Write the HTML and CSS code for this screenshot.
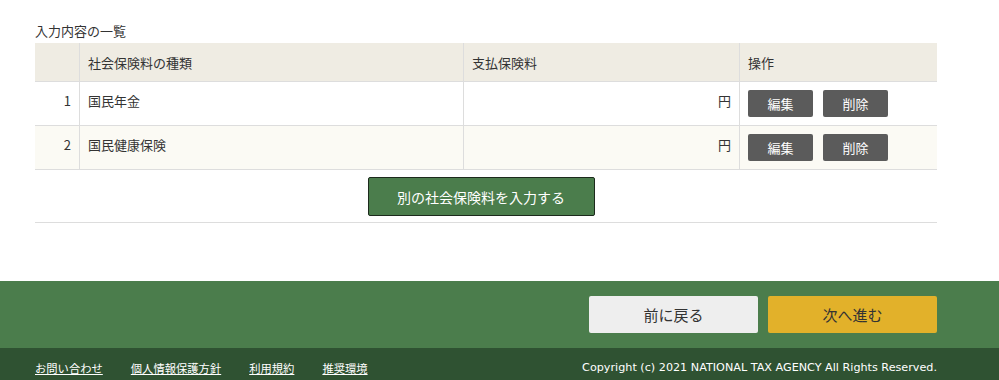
FILE: index.html
```html
<!DOCTYPE html>
<html lang="ja">
<head>
    <meta charset="UTF-8">
    <title>入力内容の一覧</title>
    <link rel="stylesheet" href="styles.css">
</head>
<body>
    <main class="content">
        <p class="list-title">入力内容の一覧</p>
        <table class="entry-table">
            <thead>
                <tr>
                    <th class="col-no"></th>
                    <th class="col-name">社会保険料の種類</th>
                    <th class="col-amount">支払保険料</th>
                    <th class="col-ops">操作</th>
                </tr>
            </thead>
            <tbody>
                <tr>
                    <td class="col-no">1</td>
                    <td class="col-name">国民年金</td>
                    <td class="col-amount">円</td>
                    <td class="col-ops">
                        <button class="btn-gray">編集</button>
                        <button class="btn-gray">削除</button>
                    </td>
                </tr>
                <tr class="alt">
                    <td class="col-no">2</td>
                    <td class="col-name">国民健康保険</td>
                    <td class="col-amount">円</td>
                    <td class="col-ops">
                        <button class="btn-gray">編集</button>
                        <button class="btn-gray">削除</button>
                    </td>
                </tr>
            </tbody>
        </table>
        <div class="add-row">
            <button class="btn-add">別の社会保険料を入力する</button>
        </div>
    </main>

    <div class="nav-band">
        <div class="nav-inner">
            <button class="btn-back">前に戻る</button>
            <button class="btn-next">次へ進む</button>
        </div>
    </div>

    <footer>
        <div class="footer-inner">
            <ul class="footer-links">
                <li><a href="#">お問い合わせ</a></li>
                <li><a href="#">個人情報保護方針</a></li>
                <li><a href="#">利用規約</a></li>
                <li><a href="#">推奨環境</a></li>
            </ul>
            <p class="copyright">Copyright (c) 2021 NATIONAL TAX AGENCY All Rights Reserved.</p>
        </div>
    </footer>
</body>
</html>
```

FILE: styles.css
```css
body {
    margin: 0;
    font-family: "Noto Sans CJK JP", "Noto Sans", sans-serif;
    font-size: 13px;
    color: #333;
    background: #fff;
}

.content {
    width: 902px;
    margin-left: 35px;
    padding-top: 21px;
    padding-bottom: 58px;
}

.list-title {
    margin: 0 0 3px;
    font-size: 13px;
    line-height: 19px;
}

.entry-table {
    width: 100%;
    border-collapse: collapse;
}

.entry-table th,
.entry-table td {
    border-left: 1px solid #ddd;
    border-bottom: 1px solid #ddd;
    padding: 0 8px;
    text-align: left;
    font-weight: normal;
}

.entry-table th:first-child,
.entry-table td:first-child {
    border-left: none;
}

.entry-table th {
    background: #efece3;
    height: 38px;
    padding-top: 0;
}

.entry-table td {
    height: 43px;
    vertical-align: top;
    padding-top: 9px;
    box-sizing: border-box;
}

.entry-table tr.alt td {
    background: #fbfaf4;
}

.col-no {
    width: 28px;
}

td.col-no {
    text-align: right !important;
}

.col-name {
    width: 367px;
}

.col-amount {
    width: 259px;
}

td.col-amount {
    text-align: right !important;
}

td.col-ops {
    padding-top: 8px;
    padding-bottom: 8px;
}

.btn-gray {
    width: 65px;
    height: 27px;
    margin-right: 7px;
    border: none;
    border-radius: 2px;
    background: #5b5b5b;
    color: #fff;
    font-family: inherit;
    font-size: 13px;
    cursor: pointer;
}

.add-row {
    display: flex;
    justify-content: center;
    padding: 7px 0 6px;
    border-bottom: 1px solid #ddd;
}

.btn-add {
    width: 227px;
    height: 39px;
    margin-left: -10px;
    border: 1px solid #1c2a1c;
    border-radius: 2px;
    background: #4b7d4c;
    color: #fff;
    font-family: inherit;
    font-size: 14px;
    cursor: pointer;
}

.nav-band {
    background: #4b7d4c;
    padding: 15px 0;
}

.nav-inner {
    width: 902px;
    margin-left: 35px;
    display: flex;
    justify-content: flex-end;
    gap: 10px;
}

.btn-back,
.btn-next {
    width: 169px;
    height: 37px;
    border: none;
    border-radius: 2px;
    font-family: inherit;
    font-size: 15px;
    color: #333;
    cursor: pointer;
}

.btn-back {
    background: #eeeeee;
}

.btn-next {
    background: #e2b12a;
}

footer {
    background: #2f5232;
    color: #fff;
    height: 32px;
}

.footer-inner {
    width: 902px;
    margin-left: 35px;
    display: flex;
    justify-content: space-between;
    align-items: center;
    height: 38px;
}

.footer-links {
    list-style: none;
    margin: 0;
    padding: 0;
    display: flex;
    gap: 28px;
}

.footer-links a {
    color: #fff;
    font-size: 11.3px;
}

.copyright {
    margin: 0;
    font-family: "DejaVu Sans", sans-serif;
    font-size: 11.2px;
}
```
